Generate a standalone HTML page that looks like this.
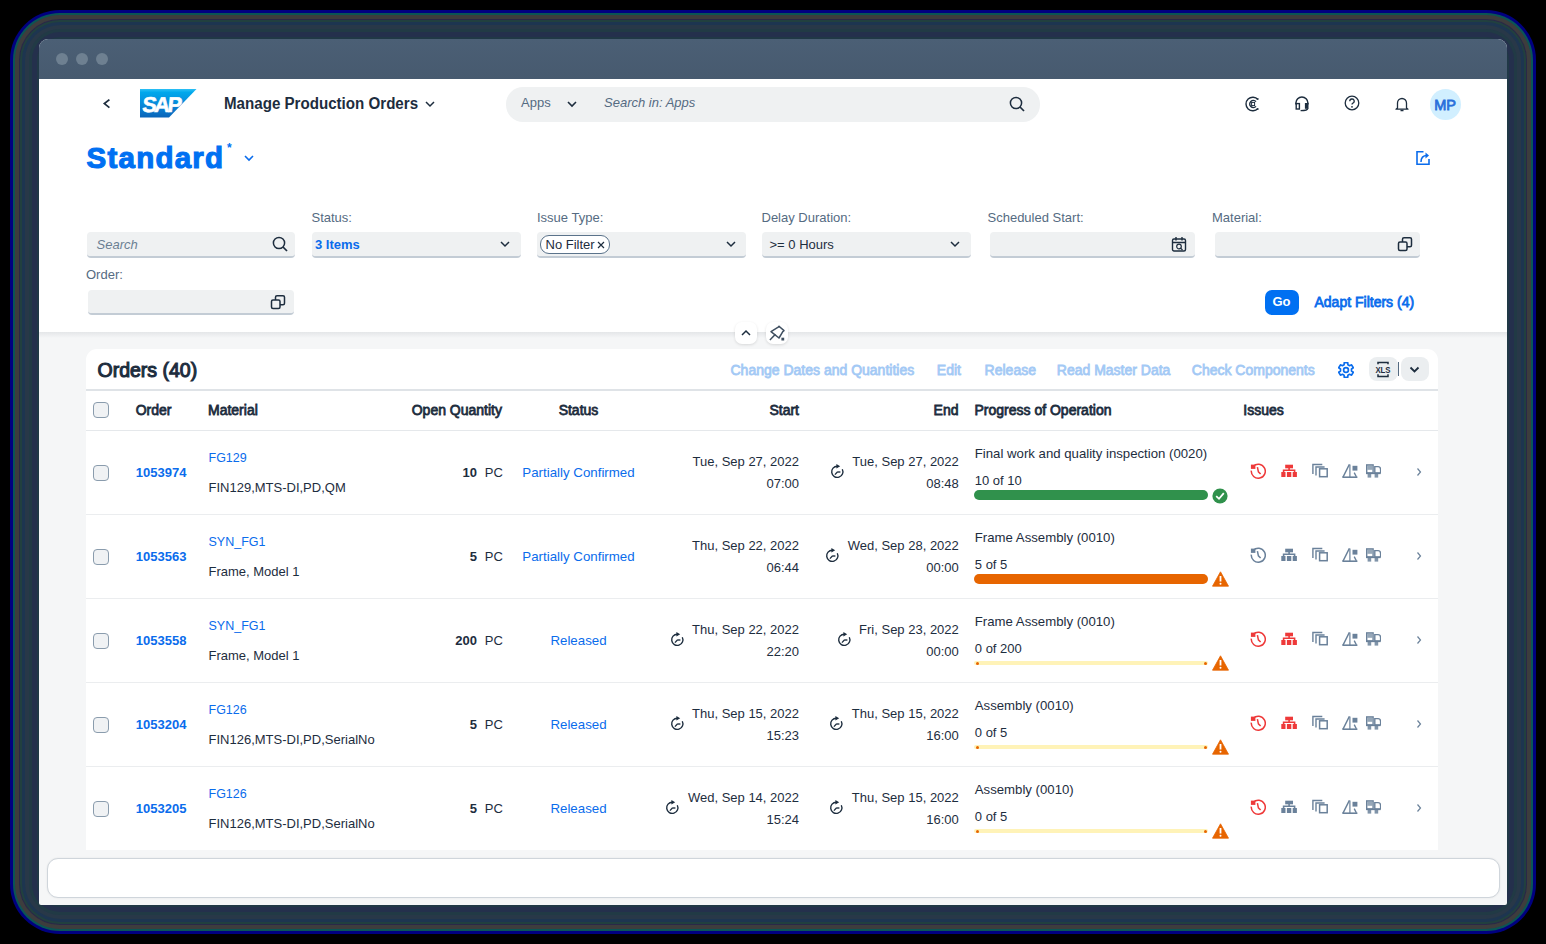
<!DOCTYPE html>
<html><head><meta charset="utf-8"><title>Manage Production Orders</title>
<style>
html,body{margin:0;padding:0;}
body{width:1546px;height:944px;background:#000;position:relative;overflow:hidden;font-family:"Liberation Sans",sans-serif;}
.b{position:absolute;box-sizing:border-box;}
.t{position:absolute;white-space:nowrap;}
</style></head><body>

<div class="b" style="left:10px;top:10px;right:10px;bottom:10px;border-radius:50px;background:#000080;"></div>
<div class="b" style="left:13px;top:13px;right:13px;bottom:13px;border-radius:47px;background:#0a5555;"></div>
<div class="b" style="left:15px;top:15px;right:15px;bottom:15px;border-radius:45px;background:#3d3d3d;"></div>
<div class="b" style="left:19px;top:19px;right:19px;bottom:19px;border-radius:41px;background:#2a2848;"></div>
<div class="b" style="left:20px;top:20px;right:20px;bottom:20px;border-radius:40px;background:#21403f;"></div>
<div class="b" style="left:22px;top:22px;right:22px;bottom:22px;border-radius:38px;background:#1d3550;"></div>
<div class="b" style="left:25px;top:25px;right:25px;bottom:25px;border-radius:35px;background:#283848;"></div>
<div class="b" style="left:29px;top:29px;right:29px;bottom:29px;border-radius:31px;background:#213a45;"></div>
<div class="b" style="left:32px;top:32px;right:32px;bottom:32px;border-radius:28px;background:#24304c;"></div>
<div class="b" style="left:37px;top:37px;right:37px;bottom:37px;border-radius:23px;background:#203846;"></div>
<div class="b" style="left:39px;top:39px;width:1468px;height:866px;border-radius:9px 9px 2px 2px;background:#f5f6f7;"></div>
<div class="b" style="left:39px;top:39px;width:1468px;height:40px;border-radius:9px 9px 0 0;background:linear-gradient(#4b5f75,#475a6f);"></div>
<div class="b" style="left:55.6px;top:53.3px;width:12px;height:12px;border-radius:50%;background:#6e8091;"></div>
<div class="b" style="left:75.7px;top:53.3px;width:12px;height:12px;border-radius:50%;background:#6e8091;"></div>
<div class="b" style="left:95.6px;top:53.3px;width:12px;height:12px;border-radius:50%;background:#6e8091;"></div>
<div class="b" style="left:39px;top:79px;width:1468px;height:253px;background:#fff;"></div>
<div class="b" style="left:39px;top:332px;width:1468px;height:6px;background:linear-gradient(#e4e6e8,#f5f6f7);"></div>
<svg class="b" style="left:100px;top:96px;" width="14" height="14" viewBox="0 0 14 14"><path d="M9.4 3.6 L4.4 7.6 L9.4 11.6" fill="none" stroke="#1d2d3e" stroke-width="1.8"/></svg>
<svg class="b" style="left:139.5px;top:89.2px;" width="57" height="28.5" viewBox="0 0 57 28.5"><defs><linearGradient id="sg" x1="0" y1="0" x2="0" y2="1"><stop offset="0" stop-color="#2ec0f5"/><stop offset="0.12" stop-color="#00a8ec"/><stop offset="0.6" stop-color="#0a84d6"/><stop offset="1" stop-color="#0a64b8"/></linearGradient></defs><path d="M0 0 H56.5 L29 28.5 H0 Z" fill="url(#sg)"/><text x="1.6" y="23.4" font-family="Liberation Sans" font-weight="bold" font-size="21.5" fill="#fff" letter-spacing="-2.2" transform="skewX(-6) translate(2.5 0)" stroke="#fff" stroke-width="0.6">SAP</text></svg>
<div class="t" style="left:224px;top:94.0px;font-size:16px;line-height:20px;color:#1d2d3e;font-weight:bold;transform:scaleX(0.945);transform-origin:0 0;">Manage Production Orders</div>
<svg class="b" style="left:424px;top:99px;" width="12" height="10" viewBox="0 0 12 10"><path d="M2 3 L6 7 L10 3" fill="none" stroke="#1d2d3e" stroke-width="1.5"/></svg>
<div class="b" style="left:505.5px;top:87px;width:534.5px;height:34.5px;border-radius:17px;background:#eff1f2;"></div>
<div class="t" style="left:521px;top:95.2px;font-size:13px;line-height:16px;color:#556b82;">Apps</div>
<svg class="b" style="left:566px;top:99px;" width="12" height="10" viewBox="0 0 12 10"><path d="M2 3 L6 7 L10 3" fill="none" stroke="#1d2d3e" stroke-width="1.6"/></svg>
<div class="t" style="left:604px;top:95.2px;font-size:13px;line-height:16px;color:#556b82;font-style:italic;">Search in: Apps</div>
<svg class="b" style="left:1009px;top:96px;" width="17" height="17" viewBox="0 0 17 17"><circle cx="7" cy="7" r="5.6" fill="none" stroke="#1d2d3e" stroke-width="1.5"/><path d="M11 11 L15 15" stroke="#1d2d3e" stroke-width="1.7"/></svg>
<svg class="b" style="left:1244.5px;top:95.5px;" width="16" height="16" viewBox="0 0 16 16"><path d="M13 3.6 A6.8 6.8 0 1 0 13 12.4" fill="none" stroke="#1d2d3e" stroke-width="1.4"/><path d="M11.6 2.8 H13.6 M11.6 13.2 H13.6" stroke="#1d2d3e" stroke-width="1.2"/><path d="M11 5.6 A3.6 3.6 0 1 0 11 10.4" fill="none" stroke="#1d2d3e" stroke-width="1.4"/><rect x="6.6" y="6.4" width="3" height="3.2" fill="none" stroke="#1d2d3e" stroke-width="1"/></svg>
<svg class="b" style="left:1294px;top:95px;" width="16" height="17" viewBox="0 0 16 17"><path d="M1.9 9.5 V8 A6 6 0 0 1 13.9 8 V9.5" fill="none" stroke="#1d2d3e" stroke-width="1.5"/><rect x="2.2" y="8.6" width="3.2" height="5.4" fill="none" stroke="#1d2d3e" stroke-width="1.4"/><rect x="10.9" y="8" width="3.6" height="5.8" fill="#1d2d3e"/><path d="M13.8 13.4 Q13.6 15.6 6.6 15.6" fill="none" stroke="#1d2d3e" stroke-width="1.4"/></svg>
<svg class="b" style="left:1344px;top:95px;" width="16" height="16" viewBox="0 0 16 16"><circle cx="8" cy="8" r="6.8" fill="none" stroke="#1d2d3e" stroke-width="1.3"/><path d="M5.8 6.3 A2.2 2.2 0 1 1 8.6 8.3 Q8 8.6 8 9.6" fill="none" stroke="#1d2d3e" stroke-width="1.3"/><circle cx="8" cy="11.8" r="0.9" fill="#1d2d3e"/></svg>
<svg class="b" style="left:1394px;top:96px;" width="16" height="16" viewBox="0 0 16 16"><path d="M3.5 12 V7 A4.5 4.5 0 0 1 12.5 7 V12 L14 13.2 H2 Z" fill="none" stroke="#1d2d3e" stroke-width="1.3" stroke-linejoin="round"/><path d="M6.5 14.5 H9.5" stroke="#1d2d3e" stroke-width="1.5"/></svg>
<div class="b" style="left:1429.5px;top:88.5px;width:31px;height:31px;border-radius:50%;background:#d1efff;"></div>
<div class="t" style="left:1295px;width:300px;top:96.0px;font-size:14.5px;line-height:18px;color:#2a6fdb;-webkit-text-stroke:0.80px #2a6fdb;text-align:center;">MP</div>
<div class="t" style="left:86.5px;top:139.1px;font-size:29.5px;line-height:37px;color:#0070f2;font-weight:bold;letter-spacing:1.25px;-webkit-text-stroke:1.1px #0070f2;">Standard</div>
<div class="t" style="left:227px;top:140.5px;font-size:12px;line-height:15px;color:#0070f2;font-weight:bold;">*</div>
<svg class="b" style="left:243px;top:153px;" width="12" height="10" viewBox="0 0 12 10"><path d="M2 3 L6 7 L10 3" fill="none" stroke="#0a6cec" stroke-width="1.6"/></svg>
<svg class="b" style="left:1415px;top:149.5px;" width="16" height="16" viewBox="0 0 16 16"><path d="M8.5 1.8 H2 V14.2 H14 V9" fill="none" stroke="#0a6cec" stroke-width="1.6"/><path d="M6 12 Q6 5.5 12 5.5" fill="none" stroke="#0a6cec" stroke-width="1.5"/><path d="M10.5 2.5 L14 5.5 L10.5 8.5 Z" fill="#0a6cec"/></svg>
<div class="t" style="left:311.5px;top:210.0px;font-size:13px;line-height:16px;color:#556b82;">Status:</div>
<div class="t" style="left:537px;top:210.0px;font-size:13px;line-height:16px;color:#556b82;">Issue Type:</div>
<div class="t" style="left:761.5px;top:210.0px;font-size:13px;line-height:16px;color:#556b82;">Delay Duration:</div>
<div class="t" style="left:987.5px;top:210.0px;font-size:13px;line-height:16px;color:#556b82;">Scheduled Start:</div>
<div class="t" style="left:1212px;top:210.0px;font-size:13px;line-height:16px;color:#556b82;">Material:</div>
<div class="b" style="left:86.5px;top:232px;width:208.0px;height:25.5px;border-radius:4px;background:#eff1f2;border-bottom:2px solid #c3ccd5;"></div>
<div class="b" style="left:311.5px;top:232px;width:209.0px;height:25.5px;border-radius:4px;background:#eff1f2;border-bottom:2px solid #c3ccd5;"></div>
<div class="b" style="left:537px;top:232px;width:208.5px;height:25.5px;border-radius:4px;background:#eff1f2;border-bottom:2px solid #c3ccd5;"></div>
<div class="b" style="left:762px;top:232px;width:209px;height:25.5px;border-radius:4px;background:#eff1f2;border-bottom:2px solid #c3ccd5;"></div>
<div class="b" style="left:990px;top:232px;width:205px;height:25.5px;border-radius:4px;background:#eff1f2;border-bottom:2px solid #c3ccd5;"></div>
<div class="b" style="left:1214.5px;top:232px;width:205.5px;height:25.5px;border-radius:4px;background:#eff1f2;border-bottom:2px solid #c3ccd5;"></div>
<div class="t" style="left:96.5px;top:237.0px;font-size:13px;line-height:16px;color:#6b7f93;font-style:italic;">Search</div>
<svg class="b" style="left:272px;top:235.5px;" width="17" height="17" viewBox="0 0 17 17"><circle cx="7" cy="7" r="5.6" fill="none" stroke="#1d2d3e" stroke-width="1.5"/><path d="M11 11 L15 15" stroke="#1d2d3e" stroke-width="1.7"/></svg>
<div class="t" style="left:315px;top:237.0px;font-size:13px;line-height:16px;color:#0a6cec;font-weight:bold;">3 Items</div>
<svg class="b" style="left:499px;top:239px;" width="12" height="10" viewBox="0 0 12 10"><path d="M2 3 L6 7 L10 3" fill="none" stroke="#1d2d3e" stroke-width="1.5"/></svg>
<svg class="b" style="left:724.5px;top:239px;" width="12" height="10" viewBox="0 0 12 10"><path d="M2 3 L6 7 L10 3" fill="none" stroke="#1d2d3e" stroke-width="1.5"/></svg>
<svg class="b" style="left:949px;top:239px;" width="12" height="10" viewBox="0 0 12 10"><path d="M2 3 L6 7 L10 3" fill="none" stroke="#1d2d3e" stroke-width="1.5"/></svg>
<div class="b" style="left:540px;top:235px;width:69.5px;height:19px;border-radius:9px;background:#fff;border:1px solid #5b738b;"></div>
<div class="t" style="left:545.5px;top:236.7px;font-size:13px;line-height:16px;color:#1d2d3e;">No Filter</div>
<svg class="b" style="left:596px;top:239.5px;" width="10" height="10" viewBox="0 0 10 10"><path d="M2 2 L8 8 M8 2 L2 8" stroke="#1d2d3e" stroke-width="1.2"/></svg>
<div class="t" style="left:769.5px;top:237.0px;font-size:13px;line-height:16px;color:#1d2d3e;">&gt;= 0 Hours</div>
<svg class="b" style="left:1171px;top:236px;" width="17" height="17" viewBox="0 0 17 17"><rect x="1.5" y="3" width="13" height="12" rx="1.5" fill="none" stroke="#1d2d3e" stroke-width="1.4"/><path d="M1.5 6.5 H14.5 M5 1 V4.5 M11 1 V4.5" stroke="#1d2d3e" stroke-width="1.4"/><circle cx="8" cy="10.5" r="2.3" fill="none" stroke="#1d2d3e" stroke-width="1.2"/><path d="M9.6 12.1 L11.5 14" stroke="#1d2d3e" stroke-width="1.2"/></svg>
<svg class="b" style="left:1397px;top:236px;" width="16" height="16" viewBox="0 0 16 16"><rect x="1.5" y="6" width="8.5" height="8.5" rx="1.5" fill="none" stroke="#1d2d3e" stroke-width="1.5"/><path d="M5.5 6 V3.2 A1.5 1.5 0 0 1 7 1.7 H13 A1.5 1.5 0 0 1 14.5 3.2 V9.2 A1.5 1.5 0 0 1 13 10.7 H10" fill="none" stroke="#1d2d3e" stroke-width="1.5"/></svg>
<div class="t" style="left:86px;top:267.4px;font-size:13px;line-height:16px;color:#556b82;">Order:</div>
<div class="b" style="left:88px;top:290px;width:205.5px;height:25px;border-radius:4px;background:#eff1f2;border-bottom:2px solid #c3ccd5;"></div>
<svg class="b" style="left:270px;top:294px;" width="16" height="16" viewBox="0 0 16 16"><rect x="1.5" y="6" width="8.5" height="8.5" rx="1.5" fill="none" stroke="#1d2d3e" stroke-width="1.5"/><path d="M5.5 6 V3.2 A1.5 1.5 0 0 1 7 1.7 H13 A1.5 1.5 0 0 1 14.5 3.2 V9.2 A1.5 1.5 0 0 1 13 10.7 H10" fill="none" stroke="#1d2d3e" stroke-width="1.5"/></svg>
<div class="b" style="left:1264.5px;top:289.5px;width:34.0px;height:25.5px;border-radius:7px;background:#0070f2;"></div>
<div class="t" style="left:1131.5px;width:300px;top:294.2px;font-size:13px;line-height:16px;color:#fff;font-weight:bold;text-align:center;">Go</div>
<div class="t" style="left:1314.5px;top:292.9px;font-size:14px;line-height:18px;color:#0a6cec;-webkit-text-stroke:0.77px #0a6cec;">Adapt Filters (4)</div>
<div class="b" style="left:735px;top:322px;width:22px;height:22px;border-radius:7px;background:#fff;box-shadow:0 1px 3px rgba(0,0,0,0.12);"></div>
<div class="b" style="left:766px;top:322px;width:22px;height:22px;border-radius:7px;background:#fff;box-shadow:0 1px 3px rgba(0,0,0,0.12);"></div>
<svg class="b" style="left:740px;top:327px;" width="12" height="12" viewBox="0 0 12 12"><path d="M2 8 L6 4 L10 8" fill="none" stroke="#1d2d3e" stroke-width="1.5"/></svg>
<svg class="b" style="left:768.5px;top:324.5px;" width="17" height="17" viewBox="0 0 17 17"><path d="M0.9 15.1 L6.4 9.3" stroke="#3f4f60" stroke-width="1.5"/><path d="M2 6.6 L9.2 2.2 L10 1.2 L15 5.6 L13.8 6.6 L10 13 Z" fill="none" stroke="#3f4f60" stroke-width="1.5" stroke-linejoin="round"/><rect x="12.4" y="12.7" width="2.8" height="2.8" fill="#3f4f60"/></svg>
<div class="b" style="left:86px;top:349px;width:1352px;height:501px;border-radius:11px 11px 0 0;background:#fff;"></div>
<div class="t" style="left:97.5px;top:357.8px;font-size:19.5px;line-height:24px;color:#1d2d3e;-webkit-text-stroke:1.07px #1d2d3e;">Orders (40)</div>
<div class="t" style="left:730.5px;top:360.9px;font-size:14px;line-height:18px;color:#a3c9f5;-webkit-text-stroke:0.77px #a3c9f5;">Change Dates and Quantities</div>
<div class="t" style="left:936.8px;top:360.9px;font-size:14px;line-height:18px;color:#a3c9f5;-webkit-text-stroke:0.77px #a3c9f5;">Edit</div>
<div class="t" style="left:984.6px;top:360.9px;font-size:14px;line-height:18px;color:#a3c9f5;-webkit-text-stroke:0.77px #a3c9f5;">Release</div>
<div class="t" style="left:1056.8px;top:360.9px;font-size:14px;line-height:18px;color:#a3c9f5;-webkit-text-stroke:0.77px #a3c9f5;">Read Master Data</div>
<div class="t" style="left:1191.8px;top:360.9px;font-size:14px;line-height:18px;color:#a3c9f5;-webkit-text-stroke:0.77px #a3c9f5;">Check Components</div>
<svg class="b" style="left:1338px;top:361.5px;" width="16" height="16" viewBox="0 0 16 16"><path d="M6.29 0.59 L9.71 0.59 L9.92 2.74 L11.60 3.71 L13.56 2.82 L15.27 5.78 L13.51 7.03 L13.51 8.97 L15.27 10.22 L13.56 13.18 L11.60 12.29 L9.92 13.26 L9.71 15.41 L6.29 15.41 L6.08 13.26 L4.40 12.29 L2.44 13.18 L0.73 10.22 L2.49 8.97 L2.49 7.03 L0.73 5.78 L2.44 2.82 L4.40 3.71 L6.08 2.74 Z" fill="none" stroke="#0a6cec" stroke-width="1.7" stroke-linejoin="round"/><circle cx="8" cy="8" r="2.4" fill="none" stroke="#0a6cec" stroke-width="1.7"/></svg>
<div class="b" style="left:1369px;top:357px;width:28.5px;height:24px;border-radius:8px;background:#ebeef0;"></div>
<div class="b" style="left:1400.5px;top:357px;width:28.0px;height:24px;border-radius:8px;background:#ebeef0;"></div>
<div class="b" style="left:1397.8px;top:362px;width:1.400000000000091px;height:14px;background:#556b82;"></div>
<svg class="b" style="left:1375px;top:361px;" width="17" height="17" viewBox="0 0 17 17"><path d="M3 3.2 V1.5 H13 V3.2" fill="none" stroke="#1d2d3e" stroke-width="1.5"/><path d="M3 13.2 V15.5 H13 V13.2" fill="none" stroke="#1d2d3e" stroke-width="1.5"/><text x="8" y="11.4" text-anchor="middle" font-family="Liberation Sans" font-weight="bold" font-size="7.8" fill="#1d2d3e" transform="translate(8 8) scale(1 1.2) translate(-8 -8)">XLS</text></svg>
<svg class="b" style="left:1408.5px;top:364.5px;" width="11" height="9" viewBox="0 0 11 9"><path d="M1.5 2.5 L5.5 6.5 L9.5 2.5" fill="none" stroke="#1d2d3e" stroke-width="1.8"/></svg>
<div class="b" style="left:86px;top:389px;width:1352px;height:2px;background:#dfe3e7;"></div>
<div class="b" style="left:93px;top:402px;width:16px;height:16px;border-radius:4px;background:#f0f2f4;border:1px solid #8a9cad;"></div>
<div class="t" style="left:135.7px;top:401.4px;font-size:14px;line-height:18px;color:#1d2d3e;-webkit-text-stroke:0.77px #1d2d3e;">Order</div>
<div class="t" style="left:208px;top:401.4px;font-size:14px;line-height:18px;color:#1d2d3e;-webkit-text-stroke:0.77px #1d2d3e;">Material</div>
<div class="t" style="right:1044px;top:401.4px;font-size:14px;line-height:18px;color:#1d2d3e;-webkit-text-stroke:0.77px #1d2d3e;text-align:right;">Open Quantity</div>
<div class="t" style="left:428.5px;width:300px;top:401.4px;font-size:14px;line-height:18px;color:#1d2d3e;-webkit-text-stroke:0.77px #1d2d3e;text-align:center;">Status</div>
<div class="t" style="right:747px;top:401.4px;font-size:14px;line-height:18px;color:#1d2d3e;-webkit-text-stroke:0.77px #1d2d3e;text-align:right;">Start</div>
<div class="t" style="right:587.5px;top:401.4px;font-size:14px;line-height:18px;color:#1d2d3e;-webkit-text-stroke:0.77px #1d2d3e;text-align:right;">End</div>
<div class="t" style="left:974.5px;top:401.4px;font-size:14px;line-height:18px;color:#1d2d3e;-webkit-text-stroke:0.77px #1d2d3e;">Progress of Operation</div>
<div class="t" style="left:1243.3px;top:401.4px;font-size:14px;line-height:18px;color:#1d2d3e;-webkit-text-stroke:0.77px #1d2d3e;">Issues</div>
<div class="b" style="left:86px;top:429.5px;width:1352px;height:1.0px;background:#e5e8eb;"></div>
<div class="b" style="left:86px;top:514px;width:1352px;height:1.2000000000000455px;background:#ebedef;"></div>
<div class="b" style="left:93px;top:464.5px;width:16px;height:16.0px;border-radius:4px;background:#f0f2f4;border:1px solid #8a9cad;"></div>
<div class="t" style="left:135.8px;top:464.9px;font-size:13px;line-height:16px;color:#0a6cec;font-weight:bold;">1053974</div>
<div class="t" style="left:208.5px;top:449.9px;font-size:12.5px;line-height:16px;color:#0a6cec;">FG129</div>
<div class="t" style="left:208.5px;top:479.7px;font-size:13px;line-height:16px;color:#1d2d3e;">FIN129,MTS-DI,PD,QM</div>
<div class="t" style="right:1069px;top:464.9px;font-size:13px;line-height:16px;color:#1d2d3e;font-weight:bold;text-align:right;">10</div>
<div class="t" style="left:484.8px;top:464.9px;font-size:13px;line-height:16px;color:#1d2d3e;">PC</div>
<div class="t" style="left:428.5px;width:300px;top:464.3px;font-size:13.3px;line-height:17px;color:#0a6cec;text-align:center;">Partially Confirmed</div>
<div class="b" style="right:747px;top:451.3px;display:flex;align-items:center;"><div style="text-align:right;font-size:13px;line-height:22px;color:#1d2d3e;white-space:nowrap">Tue, Sep 27, 2022<br>07:00</div></div>
<div class="b" style="right:587.2px;top:451.3px;display:flex;align-items:center;"><svg width="15" height="15" viewBox="0 0 15 15" style="flex:none;margin-right:7.5px;margin-bottom:3px"><path d="M12.3 5.3 A5.6 5.6 0 1 1 7.3 2.2" fill="none" stroke="#1d2d3e" stroke-width="1.4"/><path d="M6.4 0 L10.2 2.2 L6.4 4.4 Z" fill="#1d2d3e"/><path d="M7.4 8 L4.9 10.6" stroke="#1d2d3e" stroke-width="1.3"/><path d="M7.2 8 H10.4" stroke="#1d2d3e" stroke-width="1.4"/></svg><div style="text-align:right;font-size:13px;line-height:22px;color:#1d2d3e;white-space:nowrap">Tue, Sep 27, 2022<br>08:48</div></div>
<div class="t" style="left:974.8px;top:446.3px;font-size:13.2px;line-height:16px;color:#1d2d3e;">Final work and quality inspection (0020)</div>
<div class="t" style="left:974.8px;top:473.1px;font-size:13px;line-height:16px;color:#1d2d3e;">10 of 10</div>
<div class="b" style="left:973.9px;top:490.4px;width:234.5000000000001px;height:10.100000000000023px;border-radius:5px;background:#30914c;"></div>
<svg class="b" style="left:1212px;top:487.5px;" width="16" height="16" viewBox="0 0 16 16"><circle cx="8" cy="8" r="7.6" fill="#30914c"/><path d="M4.2 8.2 L7 10.8 L11.8 5.2" fill="none" stroke="#fff" stroke-width="1.8"/></svg>
<svg class="b" style="left:1250.3px;top:463px;" width="16" height="16" viewBox="0 0 16 16"><path d="M3.2 3.4 A7 7 0 1 1 1.3 7.6" fill="none" stroke="#ee3939" stroke-width="1.5"/><path d="M0.9 1.6 H5.4 V5.9 H0.9 Z" fill="#ee3939"/><path d="M7.4 4.2 L8.4 8.8 L10.6 11" fill="none" stroke="#ee3939" stroke-width="1.5"/></svg>
<svg class="b" style="left:1281px;top:463px;" width="16" height="16" viewBox="0 0 16 16"><rect x="4.2" y="1.7" width="7.8" height="3.6" fill="#ee3939"/><path d="M8.1 5 V7.3 M2.6 9.8 V7.3 H13.6 V9.8" fill="none" stroke="#ee3939" stroke-width="1.6"/><rect x="0.3" y="9" width="4.2" height="5" fill="#ee3939"/><rect x="5.9" y="9" width="4.4" height="5" fill="#ee3939"/><rect x="11.7" y="9" width="4.2" height="5" fill="#ee3939"/></svg>
<svg class="b" style="left:1311.5px;top:463px;" width="16" height="16" viewBox="0 0 16 16"><path d="M0.9 11 V1.5 H10.3" fill="none" stroke="#6a819a" stroke-width="1.4"/><path d="M4 12.5 V4 H12.6" fill="none" stroke="#6a819a" stroke-width="1.4"/><rect x="7.6" y="5.8" width="7.6" height="7.9" fill="none" stroke="#6a819a" stroke-width="1.5"/></svg>
<svg class="b" style="left:1341.6px;top:463px;" width="16" height="16" viewBox="0 0 16 16"><path d="M0.9 14.4 L7.4 1.4" fill="none" stroke="#6a819a" stroke-width="1.4"/><path d="M0.4 14.2 H15.4" stroke="#6a819a" stroke-width="1.6"/><path d="M7.9 1.4 V14.4" stroke="#6a819a" stroke-width="1.2"/><rect x="10.5" y="2.8" width="4.9" height="4.8" fill="#6a819a"/><path d="M12.2 9.6 L14.4 13.9" stroke="#6a819a" stroke-width="1.3"/></svg>
<svg class="b" style="left:1364.6px;top:463px;" width="16" height="16" viewBox="0 0 16 16"><rect x="1.7" y="1.9" width="6.4" height="8" fill="none" stroke="#6a819a" stroke-width="1.4"/><rect x="2.4" y="2.4" width="5" height="4.4" fill="#6a819a" opacity="0.7"/><path d="M9.8 3.6 H13.2 Q15.6 3.6 15.6 6.6 V9.9 H9.8 Z" fill="none" stroke="#6a819a" stroke-width="1.4"/><path d="M1 10.4 H15.6" stroke="#6a819a" stroke-width="1.5"/><rect x="2.6" y="10.8" width="3.6" height="3.8" fill="#6a819a" opacity="0.85"/><rect x="9.6" y="10.8" width="3.6" height="3.8" fill="#6a819a" opacity="0.85"/></svg>
<svg class="b" style="left:1414.5px;top:467.2px;" width="8" height="10" viewBox="0 0 8 10"><path d="M2.5 1.5 L5.5 5 L2.5 8.5" fill="none" stroke="#6a819a" stroke-width="1.2"/></svg>
<div class="b" style="left:86px;top:598px;width:1352px;height:1.2000000000000455px;background:#ebedef;"></div>
<div class="b" style="left:93px;top:548.5px;width:16px;height:16.0px;border-radius:4px;background:#f0f2f4;border:1px solid #8a9cad;"></div>
<div class="t" style="left:135.8px;top:548.9px;font-size:13px;line-height:16px;color:#0a6cec;font-weight:bold;">1053563</div>
<div class="t" style="left:208.5px;top:533.9px;font-size:12.5px;line-height:16px;color:#0a6cec;">SYN_FG1</div>
<div class="t" style="left:208.5px;top:563.7px;font-size:13px;line-height:16px;color:#1d2d3e;">Frame, Model 1</div>
<div class="t" style="right:1069px;top:548.9px;font-size:13px;line-height:16px;color:#1d2d3e;font-weight:bold;text-align:right;">5</div>
<div class="t" style="left:484.8px;top:548.9px;font-size:13px;line-height:16px;color:#1d2d3e;">PC</div>
<div class="t" style="left:428.5px;width:300px;top:548.3px;font-size:13.3px;line-height:17px;color:#0a6cec;text-align:center;">Partially Confirmed</div>
<div class="b" style="right:747px;top:535.3px;display:flex;align-items:center;"><div style="text-align:right;font-size:13px;line-height:22px;color:#1d2d3e;white-space:nowrap">Thu, Sep 22, 2022<br>06:44</div></div>
<div class="b" style="right:587.2px;top:535.3px;display:flex;align-items:center;"><svg width="15" height="15" viewBox="0 0 15 15" style="flex:none;margin-right:7.5px;margin-bottom:3px"><path d="M12.3 5.3 A5.6 5.6 0 1 1 7.3 2.2" fill="none" stroke="#1d2d3e" stroke-width="1.4"/><path d="M6.4 0 L10.2 2.2 L6.4 4.4 Z" fill="#1d2d3e"/><path d="M7.4 8 L4.9 10.6" stroke="#1d2d3e" stroke-width="1.3"/><path d="M7.2 8 H10.4" stroke="#1d2d3e" stroke-width="1.4"/></svg><div style="text-align:right;font-size:13px;line-height:22px;color:#1d2d3e;white-space:nowrap">Wed, Sep 28, 2022<br>00:00</div></div>
<div class="t" style="left:974.8px;top:530.3px;font-size:13.2px;line-height:16px;color:#1d2d3e;">Frame Assembly (0010)</div>
<div class="t" style="left:974.8px;top:557.1px;font-size:13px;line-height:16px;color:#1d2d3e;">5 of 5</div>
<div class="b" style="left:973.9px;top:574.4px;width:234.5000000000001px;height:10.100000000000023px;border-radius:5px;background:#e76500;"></div>
<svg class="b" style="left:1211.5px;top:570.5px;" width="17" height="16" viewBox="0 0 17 16"><path d="M8.5 0.8 L16.5 15.2 H0.5 Z" fill="#e76500" stroke="#e76500" stroke-width="0.8" stroke-linejoin="round"/><path d="M8.5 5 V10.5" stroke="#fff" stroke-width="1.8"/><circle cx="8.5" cy="12.8" r="1" fill="#fff"/></svg>
<svg class="b" style="left:1250.3px;top:547px;" width="16" height="16" viewBox="0 0 16 16"><path d="M3.2 3.4 A7 7 0 1 1 1.3 7.6" fill="none" stroke="#6a819a" stroke-width="1.5"/><path d="M0.9 1.6 H5.4 V5.9 H0.9 Z" fill="#6a819a"/><path d="M7.4 4.2 L8.4 8.8 L10.6 11" fill="none" stroke="#6a819a" stroke-width="1.5"/></svg>
<svg class="b" style="left:1281px;top:547px;" width="16" height="16" viewBox="0 0 16 16"><rect x="4.2" y="1.7" width="7.8" height="3.6" fill="#6a819a"/><path d="M8.1 5 V7.3 M2.6 9.8 V7.3 H13.6 V9.8" fill="none" stroke="#6a819a" stroke-width="1.6"/><rect x="0.3" y="9" width="4.2" height="5" fill="#6a819a"/><rect x="5.9" y="9" width="4.4" height="5" fill="#6a819a"/><rect x="11.7" y="9" width="4.2" height="5" fill="#6a819a"/></svg>
<svg class="b" style="left:1311.5px;top:547px;" width="16" height="16" viewBox="0 0 16 16"><path d="M0.9 11 V1.5 H10.3" fill="none" stroke="#6a819a" stroke-width="1.4"/><path d="M4 12.5 V4 H12.6" fill="none" stroke="#6a819a" stroke-width="1.4"/><rect x="7.6" y="5.8" width="7.6" height="7.9" fill="none" stroke="#6a819a" stroke-width="1.5"/></svg>
<svg class="b" style="left:1341.6px;top:547px;" width="16" height="16" viewBox="0 0 16 16"><path d="M0.9 14.4 L7.4 1.4" fill="none" stroke="#6a819a" stroke-width="1.4"/><path d="M0.4 14.2 H15.4" stroke="#6a819a" stroke-width="1.6"/><path d="M7.9 1.4 V14.4" stroke="#6a819a" stroke-width="1.2"/><rect x="10.5" y="2.8" width="4.9" height="4.8" fill="#6a819a"/><path d="M12.2 9.6 L14.4 13.9" stroke="#6a819a" stroke-width="1.3"/></svg>
<svg class="b" style="left:1364.6px;top:547px;" width="16" height="16" viewBox="0 0 16 16"><rect x="1.7" y="1.9" width="6.4" height="8" fill="none" stroke="#6a819a" stroke-width="1.4"/><rect x="2.4" y="2.4" width="5" height="4.4" fill="#6a819a" opacity="0.7"/><path d="M9.8 3.6 H13.2 Q15.6 3.6 15.6 6.6 V9.9 H9.8 Z" fill="none" stroke="#6a819a" stroke-width="1.4"/><path d="M1 10.4 H15.6" stroke="#6a819a" stroke-width="1.5"/><rect x="2.6" y="10.8" width="3.6" height="3.8" fill="#6a819a" opacity="0.85"/><rect x="9.6" y="10.8" width="3.6" height="3.8" fill="#6a819a" opacity="0.85"/></svg>
<svg class="b" style="left:1414.5px;top:551.2px;" width="8" height="10" viewBox="0 0 8 10"><path d="M2.5 1.5 L5.5 5 L2.5 8.5" fill="none" stroke="#6a819a" stroke-width="1.2"/></svg>
<div class="b" style="left:86px;top:682px;width:1352px;height:1.2000000000000455px;background:#ebedef;"></div>
<div class="b" style="left:93px;top:632.5px;width:16px;height:16.0px;border-radius:4px;background:#f0f2f4;border:1px solid #8a9cad;"></div>
<div class="t" style="left:135.8px;top:632.9px;font-size:13px;line-height:16px;color:#0a6cec;font-weight:bold;">1053558</div>
<div class="t" style="left:208.5px;top:617.9px;font-size:12.5px;line-height:16px;color:#0a6cec;">SYN_FG1</div>
<div class="t" style="left:208.5px;top:647.7px;font-size:13px;line-height:16px;color:#1d2d3e;">Frame, Model 1</div>
<div class="t" style="right:1069px;top:632.9px;font-size:13px;line-height:16px;color:#1d2d3e;font-weight:bold;text-align:right;">200</div>
<div class="t" style="left:484.8px;top:632.9px;font-size:13px;line-height:16px;color:#1d2d3e;">PC</div>
<div class="t" style="left:428.5px;width:300px;top:632.3px;font-size:13.3px;line-height:17px;color:#0a6cec;text-align:center;">Released</div>
<div class="b" style="right:747px;top:619.3px;display:flex;align-items:center;"><svg width="15" height="15" viewBox="0 0 15 15" style="flex:none;margin-right:7.5px;margin-bottom:3px"><path d="M12.3 5.3 A5.6 5.6 0 1 1 7.3 2.2" fill="none" stroke="#1d2d3e" stroke-width="1.4"/><path d="M6.4 0 L10.2 2.2 L6.4 4.4 Z" fill="#1d2d3e"/><path d="M7.4 8 L4.9 10.6" stroke="#1d2d3e" stroke-width="1.3"/><path d="M7.2 8 H10.4" stroke="#1d2d3e" stroke-width="1.4"/></svg><div style="text-align:right;font-size:13px;line-height:22px;color:#1d2d3e;white-space:nowrap">Thu, Sep 22, 2022<br>22:20</div></div>
<div class="b" style="right:587.2px;top:619.3px;display:flex;align-items:center;"><svg width="15" height="15" viewBox="0 0 15 15" style="flex:none;margin-right:7.5px;margin-bottom:3px"><path d="M12.3 5.3 A5.6 5.6 0 1 1 7.3 2.2" fill="none" stroke="#1d2d3e" stroke-width="1.4"/><path d="M6.4 0 L10.2 2.2 L6.4 4.4 Z" fill="#1d2d3e"/><path d="M7.4 8 L4.9 10.6" stroke="#1d2d3e" stroke-width="1.3"/><path d="M7.2 8 H10.4" stroke="#1d2d3e" stroke-width="1.4"/></svg><div style="text-align:right;font-size:13px;line-height:22px;color:#1d2d3e;white-space:nowrap">Fri, Sep 23, 2022<br>00:00</div></div>
<div class="t" style="left:974.8px;top:614.3px;font-size:13.2px;line-height:16px;color:#1d2d3e;">Frame Assembly (0010)</div>
<div class="t" style="left:974.8px;top:641.1px;font-size:13px;line-height:16px;color:#1d2d3e;">0 of 200</div>
<div class="b" style="left:974px;top:660.8px;width:234px;height:4.600000000000023px;border-radius:2.5px;background:#fff3b8;"></div>
<div class="b" style="left:975.5px;top:661.6px;width:3.0px;height:3.0px;border-radius:50%;background:#e76500;"></div>
<div class="b" style="left:1203.5px;top:661.6px;width:3.0px;height:3.0px;border-radius:50%;background:#e76500;"></div>
<svg class="b" style="left:1211.5px;top:654.5px;" width="17" height="16" viewBox="0 0 17 16"><path d="M8.5 0.8 L16.5 15.2 H0.5 Z" fill="#e76500" stroke="#e76500" stroke-width="0.8" stroke-linejoin="round"/><path d="M8.5 5 V10.5" stroke="#fff" stroke-width="1.8"/><circle cx="8.5" cy="12.8" r="1" fill="#fff"/></svg>
<svg class="b" style="left:1250.3px;top:631px;" width="16" height="16" viewBox="0 0 16 16"><path d="M3.2 3.4 A7 7 0 1 1 1.3 7.6" fill="none" stroke="#ee3939" stroke-width="1.5"/><path d="M0.9 1.6 H5.4 V5.9 H0.9 Z" fill="#ee3939"/><path d="M7.4 4.2 L8.4 8.8 L10.6 11" fill="none" stroke="#ee3939" stroke-width="1.5"/></svg>
<svg class="b" style="left:1281px;top:631px;" width="16" height="16" viewBox="0 0 16 16"><rect x="4.2" y="1.7" width="7.8" height="3.6" fill="#ee3939"/><path d="M8.1 5 V7.3 M2.6 9.8 V7.3 H13.6 V9.8" fill="none" stroke="#ee3939" stroke-width="1.6"/><rect x="0.3" y="9" width="4.2" height="5" fill="#ee3939"/><rect x="5.9" y="9" width="4.4" height="5" fill="#ee3939"/><rect x="11.7" y="9" width="4.2" height="5" fill="#ee3939"/></svg>
<svg class="b" style="left:1311.5px;top:631px;" width="16" height="16" viewBox="0 0 16 16"><path d="M0.9 11 V1.5 H10.3" fill="none" stroke="#6a819a" stroke-width="1.4"/><path d="M4 12.5 V4 H12.6" fill="none" stroke="#6a819a" stroke-width="1.4"/><rect x="7.6" y="5.8" width="7.6" height="7.9" fill="none" stroke="#6a819a" stroke-width="1.5"/></svg>
<svg class="b" style="left:1341.6px;top:631px;" width="16" height="16" viewBox="0 0 16 16"><path d="M0.9 14.4 L7.4 1.4" fill="none" stroke="#6a819a" stroke-width="1.4"/><path d="M0.4 14.2 H15.4" stroke="#6a819a" stroke-width="1.6"/><path d="M7.9 1.4 V14.4" stroke="#6a819a" stroke-width="1.2"/><rect x="10.5" y="2.8" width="4.9" height="4.8" fill="#6a819a"/><path d="M12.2 9.6 L14.4 13.9" stroke="#6a819a" stroke-width="1.3"/></svg>
<svg class="b" style="left:1364.6px;top:631px;" width="16" height="16" viewBox="0 0 16 16"><rect x="1.7" y="1.9" width="6.4" height="8" fill="none" stroke="#6a819a" stroke-width="1.4"/><rect x="2.4" y="2.4" width="5" height="4.4" fill="#6a819a" opacity="0.7"/><path d="M9.8 3.6 H13.2 Q15.6 3.6 15.6 6.6 V9.9 H9.8 Z" fill="none" stroke="#6a819a" stroke-width="1.4"/><path d="M1 10.4 H15.6" stroke="#6a819a" stroke-width="1.5"/><rect x="2.6" y="10.8" width="3.6" height="3.8" fill="#6a819a" opacity="0.85"/><rect x="9.6" y="10.8" width="3.6" height="3.8" fill="#6a819a" opacity="0.85"/></svg>
<svg class="b" style="left:1414.5px;top:635.2px;" width="8" height="10" viewBox="0 0 8 10"><path d="M2.5 1.5 L5.5 5 L2.5 8.5" fill="none" stroke="#6a819a" stroke-width="1.2"/></svg>
<div class="b" style="left:86px;top:766px;width:1352px;height:1.2000000000000455px;background:#ebedef;"></div>
<div class="b" style="left:93px;top:716.5px;width:16px;height:16.0px;border-radius:4px;background:#f0f2f4;border:1px solid #8a9cad;"></div>
<div class="t" style="left:135.8px;top:716.9px;font-size:13px;line-height:16px;color:#0a6cec;font-weight:bold;">1053204</div>
<div class="t" style="left:208.5px;top:701.9px;font-size:12.5px;line-height:16px;color:#0a6cec;">FG126</div>
<div class="t" style="left:208.5px;top:731.7px;font-size:13px;line-height:16px;color:#1d2d3e;">FIN126,MTS-DI,PD,SerialNo</div>
<div class="t" style="right:1069px;top:716.9px;font-size:13px;line-height:16px;color:#1d2d3e;font-weight:bold;text-align:right;">5</div>
<div class="t" style="left:484.8px;top:716.9px;font-size:13px;line-height:16px;color:#1d2d3e;">PC</div>
<div class="t" style="left:428.5px;width:300px;top:716.3px;font-size:13.3px;line-height:17px;color:#0a6cec;text-align:center;">Released</div>
<div class="b" style="right:747px;top:703.3px;display:flex;align-items:center;"><svg width="15" height="15" viewBox="0 0 15 15" style="flex:none;margin-right:7.5px;margin-bottom:3px"><path d="M12.3 5.3 A5.6 5.6 0 1 1 7.3 2.2" fill="none" stroke="#1d2d3e" stroke-width="1.4"/><path d="M6.4 0 L10.2 2.2 L6.4 4.4 Z" fill="#1d2d3e"/><path d="M7.4 8 L4.9 10.6" stroke="#1d2d3e" stroke-width="1.3"/><path d="M7.2 8 H10.4" stroke="#1d2d3e" stroke-width="1.4"/></svg><div style="text-align:right;font-size:13px;line-height:22px;color:#1d2d3e;white-space:nowrap">Thu, Sep 15, 2022<br>15:23</div></div>
<div class="b" style="right:587.2px;top:703.3px;display:flex;align-items:center;"><svg width="15" height="15" viewBox="0 0 15 15" style="flex:none;margin-right:7.5px;margin-bottom:3px"><path d="M12.3 5.3 A5.6 5.6 0 1 1 7.3 2.2" fill="none" stroke="#1d2d3e" stroke-width="1.4"/><path d="M6.4 0 L10.2 2.2 L6.4 4.4 Z" fill="#1d2d3e"/><path d="M7.4 8 L4.9 10.6" stroke="#1d2d3e" stroke-width="1.3"/><path d="M7.2 8 H10.4" stroke="#1d2d3e" stroke-width="1.4"/></svg><div style="text-align:right;font-size:13px;line-height:22px;color:#1d2d3e;white-space:nowrap">Thu, Sep 15, 2022<br>16:00</div></div>
<div class="t" style="left:974.8px;top:698.3px;font-size:13.2px;line-height:16px;color:#1d2d3e;">Assembly (0010)</div>
<div class="t" style="left:974.8px;top:725.1px;font-size:13px;line-height:16px;color:#1d2d3e;">0 of 5</div>
<div class="b" style="left:974px;top:744.8px;width:234px;height:4.600000000000023px;border-radius:2.5px;background:#fff3b8;"></div>
<div class="b" style="left:975.5px;top:745.6px;width:3.0px;height:3.0px;border-radius:50%;background:#e76500;"></div>
<div class="b" style="left:1203.5px;top:745.6px;width:3.0px;height:3.0px;border-radius:50%;background:#e76500;"></div>
<svg class="b" style="left:1211.5px;top:738.5px;" width="17" height="16" viewBox="0 0 17 16"><path d="M8.5 0.8 L16.5 15.2 H0.5 Z" fill="#e76500" stroke="#e76500" stroke-width="0.8" stroke-linejoin="round"/><path d="M8.5 5 V10.5" stroke="#fff" stroke-width="1.8"/><circle cx="8.5" cy="12.8" r="1" fill="#fff"/></svg>
<svg class="b" style="left:1250.3px;top:715px;" width="16" height="16" viewBox="0 0 16 16"><path d="M3.2 3.4 A7 7 0 1 1 1.3 7.6" fill="none" stroke="#ee3939" stroke-width="1.5"/><path d="M0.9 1.6 H5.4 V5.9 H0.9 Z" fill="#ee3939"/><path d="M7.4 4.2 L8.4 8.8 L10.6 11" fill="none" stroke="#ee3939" stroke-width="1.5"/></svg>
<svg class="b" style="left:1281px;top:715px;" width="16" height="16" viewBox="0 0 16 16"><rect x="4.2" y="1.7" width="7.8" height="3.6" fill="#ee3939"/><path d="M8.1 5 V7.3 M2.6 9.8 V7.3 H13.6 V9.8" fill="none" stroke="#ee3939" stroke-width="1.6"/><rect x="0.3" y="9" width="4.2" height="5" fill="#ee3939"/><rect x="5.9" y="9" width="4.4" height="5" fill="#ee3939"/><rect x="11.7" y="9" width="4.2" height="5" fill="#ee3939"/></svg>
<svg class="b" style="left:1311.5px;top:715px;" width="16" height="16" viewBox="0 0 16 16"><path d="M0.9 11 V1.5 H10.3" fill="none" stroke="#6a819a" stroke-width="1.4"/><path d="M4 12.5 V4 H12.6" fill="none" stroke="#6a819a" stroke-width="1.4"/><rect x="7.6" y="5.8" width="7.6" height="7.9" fill="none" stroke="#6a819a" stroke-width="1.5"/></svg>
<svg class="b" style="left:1341.6px;top:715px;" width="16" height="16" viewBox="0 0 16 16"><path d="M0.9 14.4 L7.4 1.4" fill="none" stroke="#6a819a" stroke-width="1.4"/><path d="M0.4 14.2 H15.4" stroke="#6a819a" stroke-width="1.6"/><path d="M7.9 1.4 V14.4" stroke="#6a819a" stroke-width="1.2"/><rect x="10.5" y="2.8" width="4.9" height="4.8" fill="#6a819a"/><path d="M12.2 9.6 L14.4 13.9" stroke="#6a819a" stroke-width="1.3"/></svg>
<svg class="b" style="left:1364.6px;top:715px;" width="16" height="16" viewBox="0 0 16 16"><rect x="1.7" y="1.9" width="6.4" height="8" fill="none" stroke="#6a819a" stroke-width="1.4"/><rect x="2.4" y="2.4" width="5" height="4.4" fill="#6a819a" opacity="0.7"/><path d="M9.8 3.6 H13.2 Q15.6 3.6 15.6 6.6 V9.9 H9.8 Z" fill="none" stroke="#6a819a" stroke-width="1.4"/><path d="M1 10.4 H15.6" stroke="#6a819a" stroke-width="1.5"/><rect x="2.6" y="10.8" width="3.6" height="3.8" fill="#6a819a" opacity="0.85"/><rect x="9.6" y="10.8" width="3.6" height="3.8" fill="#6a819a" opacity="0.85"/></svg>
<svg class="b" style="left:1414.5px;top:719.2px;" width="8" height="10" viewBox="0 0 8 10"><path d="M2.5 1.5 L5.5 5 L2.5 8.5" fill="none" stroke="#6a819a" stroke-width="1.2"/></svg>
<div class="b" style="left:93px;top:800.5px;width:16px;height:16.0px;border-radius:4px;background:#f0f2f4;border:1px solid #8a9cad;"></div>
<div class="t" style="left:135.8px;top:800.9px;font-size:13px;line-height:16px;color:#0a6cec;font-weight:bold;">1053205</div>
<div class="t" style="left:208.5px;top:785.9px;font-size:12.5px;line-height:16px;color:#0a6cec;">FG126</div>
<div class="t" style="left:208.5px;top:815.7px;font-size:13px;line-height:16px;color:#1d2d3e;">FIN126,MTS-DI,PD,SerialNo</div>
<div class="t" style="right:1069px;top:800.9px;font-size:13px;line-height:16px;color:#1d2d3e;font-weight:bold;text-align:right;">5</div>
<div class="t" style="left:484.8px;top:800.9px;font-size:13px;line-height:16px;color:#1d2d3e;">PC</div>
<div class="t" style="left:428.5px;width:300px;top:800.3px;font-size:13.3px;line-height:17px;color:#0a6cec;text-align:center;">Released</div>
<div class="b" style="right:747px;top:787.3px;display:flex;align-items:center;"><svg width="15" height="15" viewBox="0 0 15 15" style="flex:none;margin-right:7.5px;margin-bottom:3px"><path d="M12.3 5.3 A5.6 5.6 0 1 1 7.3 2.2" fill="none" stroke="#1d2d3e" stroke-width="1.4"/><path d="M6.4 0 L10.2 2.2 L6.4 4.4 Z" fill="#1d2d3e"/><path d="M7.4 8 L4.9 10.6" stroke="#1d2d3e" stroke-width="1.3"/><path d="M7.2 8 H10.4" stroke="#1d2d3e" stroke-width="1.4"/></svg><div style="text-align:right;font-size:13px;line-height:22px;color:#1d2d3e;white-space:nowrap">Wed, Sep 14, 2022<br>15:24</div></div>
<div class="b" style="right:587.2px;top:787.3px;display:flex;align-items:center;"><svg width="15" height="15" viewBox="0 0 15 15" style="flex:none;margin-right:7.5px;margin-bottom:3px"><path d="M12.3 5.3 A5.6 5.6 0 1 1 7.3 2.2" fill="none" stroke="#1d2d3e" stroke-width="1.4"/><path d="M6.4 0 L10.2 2.2 L6.4 4.4 Z" fill="#1d2d3e"/><path d="M7.4 8 L4.9 10.6" stroke="#1d2d3e" stroke-width="1.3"/><path d="M7.2 8 H10.4" stroke="#1d2d3e" stroke-width="1.4"/></svg><div style="text-align:right;font-size:13px;line-height:22px;color:#1d2d3e;white-space:nowrap">Thu, Sep 15, 2022<br>16:00</div></div>
<div class="t" style="left:974.8px;top:782.3px;font-size:13.2px;line-height:16px;color:#1d2d3e;">Assembly (0010)</div>
<div class="t" style="left:974.8px;top:809.1px;font-size:13px;line-height:16px;color:#1d2d3e;">0 of 5</div>
<div class="b" style="left:974px;top:828.8px;width:234px;height:4.600000000000023px;border-radius:2.5px;background:#fff3b8;"></div>
<div class="b" style="left:975.5px;top:829.6px;width:3.0px;height:3.0px;border-radius:50%;background:#e76500;"></div>
<div class="b" style="left:1203.5px;top:829.6px;width:3.0px;height:3.0px;border-radius:50%;background:#e76500;"></div>
<svg class="b" style="left:1211.5px;top:822.5px;" width="17" height="16" viewBox="0 0 17 16"><path d="M8.5 0.8 L16.5 15.2 H0.5 Z" fill="#e76500" stroke="#e76500" stroke-width="0.8" stroke-linejoin="round"/><path d="M8.5 5 V10.5" stroke="#fff" stroke-width="1.8"/><circle cx="8.5" cy="12.8" r="1" fill="#fff"/></svg>
<svg class="b" style="left:1250.3px;top:799px;" width="16" height="16" viewBox="0 0 16 16"><path d="M3.2 3.4 A7 7 0 1 1 1.3 7.6" fill="none" stroke="#ee3939" stroke-width="1.5"/><path d="M0.9 1.6 H5.4 V5.9 H0.9 Z" fill="#ee3939"/><path d="M7.4 4.2 L8.4 8.8 L10.6 11" fill="none" stroke="#ee3939" stroke-width="1.5"/></svg>
<svg class="b" style="left:1281px;top:799px;" width="16" height="16" viewBox="0 0 16 16"><rect x="4.2" y="1.7" width="7.8" height="3.6" fill="#6a819a"/><path d="M8.1 5 V7.3 M2.6 9.8 V7.3 H13.6 V9.8" fill="none" stroke="#6a819a" stroke-width="1.6"/><rect x="0.3" y="9" width="4.2" height="5" fill="#6a819a"/><rect x="5.9" y="9" width="4.4" height="5" fill="#6a819a"/><rect x="11.7" y="9" width="4.2" height="5" fill="#6a819a"/></svg>
<svg class="b" style="left:1311.5px;top:799px;" width="16" height="16" viewBox="0 0 16 16"><path d="M0.9 11 V1.5 H10.3" fill="none" stroke="#6a819a" stroke-width="1.4"/><path d="M4 12.5 V4 H12.6" fill="none" stroke="#6a819a" stroke-width="1.4"/><rect x="7.6" y="5.8" width="7.6" height="7.9" fill="none" stroke="#6a819a" stroke-width="1.5"/></svg>
<svg class="b" style="left:1341.6px;top:799px;" width="16" height="16" viewBox="0 0 16 16"><path d="M0.9 14.4 L7.4 1.4" fill="none" stroke="#6a819a" stroke-width="1.4"/><path d="M0.4 14.2 H15.4" stroke="#6a819a" stroke-width="1.6"/><path d="M7.9 1.4 V14.4" stroke="#6a819a" stroke-width="1.2"/><rect x="10.5" y="2.8" width="4.9" height="4.8" fill="#6a819a"/><path d="M12.2 9.6 L14.4 13.9" stroke="#6a819a" stroke-width="1.3"/></svg>
<svg class="b" style="left:1364.6px;top:799px;" width="16" height="16" viewBox="0 0 16 16"><rect x="1.7" y="1.9" width="6.4" height="8" fill="none" stroke="#6a819a" stroke-width="1.4"/><rect x="2.4" y="2.4" width="5" height="4.4" fill="#6a819a" opacity="0.7"/><path d="M9.8 3.6 H13.2 Q15.6 3.6 15.6 6.6 V9.9 H9.8 Z" fill="none" stroke="#6a819a" stroke-width="1.4"/><path d="M1 10.4 H15.6" stroke="#6a819a" stroke-width="1.5"/><rect x="2.6" y="10.8" width="3.6" height="3.8" fill="#6a819a" opacity="0.85"/><rect x="9.6" y="10.8" width="3.6" height="3.8" fill="#6a819a" opacity="0.85"/></svg>
<svg class="b" style="left:1414.5px;top:803.2px;" width="8" height="10" viewBox="0 0 8 10"><path d="M2.5 1.5 L5.5 5 L2.5 8.5" fill="none" stroke="#6a819a" stroke-width="1.2"/></svg>
<div class="b" style="left:46.5px;top:857.5px;width:1453.0px;height:40.0px;border-radius:11px;background:#fff;border:1px solid #cfd5db;box-shadow:0 0 2px rgba(0,0,0,0.08);"></div>
</body></html>
